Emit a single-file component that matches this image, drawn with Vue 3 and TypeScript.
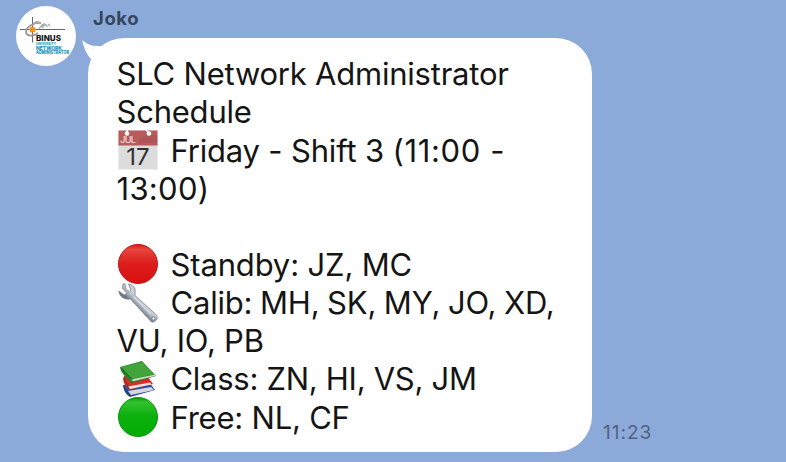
<script setup lang="ts">
type Icon = 'calendar' | 'red' | 'wrench' | 'books' | 'green'

interface Line {
  id: string
  text: string
  hours?: string
  icon?: Icon
}

const lines: Line[] = [
  { id: 'title', text: 'SLC Network Administrator' },
  { id: 'title-end', text: 'Schedule' },
  { id: 'shift', text: 'Friday - Shift 3 ', hours: '(11:00 -', icon: 'calendar' },
  { id: 'shift-end', text: '13:00)' },
  { id: 'blank', text: '' },
  { id: 'standby', text: 'Standby: JZ, MC', icon: 'red' },
  { id: 'calib', text: 'Calib: MH, SK, MY, JO, XD,', icon: 'wrench' },
  { id: 'calib-end', text: 'VU, IO, PB' },
  { id: 'class', text: 'Class: ZN, HI, VS, JM', icon: 'books' },
  { id: 'free', text: 'Free: NL, CF', icon: 'green' },
]
</script>

<template>
  <main class="chat">
    <svg class="avatar" viewBox="0 0 60 60">
      <circle cx="30" cy="30" r="30" fill="#fff" />
      <g fill="none" stroke="#555" stroke-width=".9">
        <path d="M4 23.500H49M16.500 11V36.500" />
        <path d="M25 17C18 16 10 21 10 26c0 4 7 5 12 1" stroke="#999" stroke-width="1.800" />
        <path d="M18 17q5-3 6 1M23 23q3-5 6-5m-3 4q4-6 5-1m1-3 2 2" stroke="#aaa" stroke-width="1.400" />
      </g>
      <circle cx="16.500" cy="23.800" r="3" fill="#f39212" />
      <g class="logo-text">
        <text x="20" y="34.800" font-size="7.600" textLength="25" lengthAdjust="spacingAndGlyphs" fill="#111">BINUS</text>
        <text x="20" y="38.900" font-size="3.900" textLength="20" lengthAdjust="spacingAndGlyphs" fill="#2c9dbd">UNIVERSITY</text>
        <text x="20" y="43.700" font-size="5" textLength="26" lengthAdjust="spacingAndGlyphs" fill="#168fb8">NETWORK</text>
        <text x="20" y="48.200" font-size="4.500" textLength="33" lengthAdjust="spacingAndGlyphs" fill="#168fb8">ADMINISTRATOR</text>
      </g>
    </svg>

    <section class="message">
      <div class="sender">Joko</div>
      <div class="row">
        <div class="bubble">
          <svg class="tail" viewBox="0 0 40 30">
            <path d="M.3 0Q7 7 19 5.900L26 8L14 24L8.500 18.500Q2 11 .3 0Z" fill="#fff" />
          </svg>
          <p v-for="line in lines" :key="line.id" class="line" :class="line.id">
            <svg v-if="line.icon" class="icon" viewBox="0 0 40 40">
              <defs>
                <linearGradient id="redFill" x1="0" y1="0" x2="0" y2="1">
                  <stop offset="0" stop-color="#d51b18" /><stop offset=".12" stop-color="#e8443e" />
                  <stop offset=".48" stop-color="#dc1f1d" /><stop offset="1" stop-color="#d90f10" />
                </linearGradient>
                <linearGradient id="greenFill" x1="0" y1="0" x2="0" y2="1">
                  <stop offset="0" stop-color="#079b08" /><stop offset=".12" stop-color="#33c22f" />
                  <stop offset=".48" stop-color="#0bb00c" /><stop offset="1" stop-color="#03ad05" />
                </linearGradient>
                <linearGradient id="steel" gradientUnits="userSpaceOnUse" x1="22" y1="18" x2="17" y2="23">
                  <stop offset="0" stop-color="#c9d0d7" /><stop offset=".5" stop-color="#a4adb7" /><stop offset="1" stop-color="#6b7480" />
                </linearGradient>
              </defs>
              <g v-if="line.icon === 'calendar'">
                <path d="M.5.500H39.500V39.500H.5Z" fill="#dcdcdc" />
                <path d="M.5.500H39.500V15.500H.5Z" fill="#b95a5b" />
                <path d="M22 13V8m2 5V7m2 6V7m2 6V6m2 7V6m2 7V6m2 7V5m2 8V5m2 8V5" stroke="#a44d4e" stroke-width=".8" />
                <path d="M9 0V3M28 0l3 3" stroke="#fff" stroke-width="1.500" />
                <circle cx="9" cy="3.500" r="2.300" fill="#fff" /><circle cx="31" cy="3.500" r="2.300" fill="#fff" />
                <text x="2.200" y="13.300" font-size="9" textLength="15.500" fill="#fbeaea">JUL</text>
                <text x="8.300" y="35" font-size="23" textLength="23" lengthAdjust="spacingAndGlyphs" fill="#333">17</text>
              </g>
              <circle v-else-if="line.icon === 'red'" cx="20" cy="20" r="19.500" fill="url(#redFill)" stroke="#bd1714" />
              <circle v-else-if="line.icon === 'green'" cx="20" cy="20" r="19.500" fill="url(#greenFill)" stroke="#09930a" />
              <g v-else-if="line.icon === 'wrench'">
                <path d="M7 .7 7.500 6 11 8.500 13 7 10.500 1C15 1.500 18 5 17 9L17 12.500 38.500 32C41 35.500 37 40 33.500 39L12.500 16C6 17 1 13 1 8L6 12 9 10.500 4.500 5.500 5 1Z" fill="url(#steel)" stroke="#78828e" stroke-width=".8" stroke-linejoin="round" />
                <path d="m16 14 17 17" stroke="#d9dee2" stroke-width="1.300" />
                <circle cx="35.500" cy="35.500" r="1.700" fill="#fff" stroke="#59626d" stroke-width=".9" />
              </g>
              <g v-else>
                <path d="M5 26 31 23 37 31 12 38Q8 36 6 31Z" fill="#244aa4" />
                <path d="m10 32 23-4 3 3-23 5Z" fill="#d5d8df" />
                <path d="M6 17 28 15 35 25 11 31Q6 27 5 20Z" fill="#d72d25" />
                <path d="m10 27.500 22-4 1.500 2-21.500 4.500Z" fill="#eee2dd" />
                <path d="M2 8 24 2 38 17 14 24Q6 17 3 12Z" fill="#258226" />
                <path d="M3 8 24 3 36 15 14 20Z" fill="#42a53c" />
                <path d="m13 20.500 24-5v1.500l-23 5.500Z" fill="#cfdcc8" />
                <path d="M3 9 14 20v4M6 19l5 11M5 27l7 10" fill="none" stroke="#174b29" stroke-width=".7" />
              </g>
            </svg>
            <span class="text">{{ line.text }}<span v-if="line.hours" class="hours">{{ line.hours }}</span></span>
          </p>
        </div>
        <time class="time">11:23</time>
      </div>
    </section>
  </main>
</template>

<style>
body { background: #8caad9; }
</style>

<style scoped>
.chat {
  box-sizing: border-box;
  display: flex;
  align-items: flex-start;
  gap: 12px;
  width: 786px;
  height: 462px;
  padding: 6px 0 0 16px;
  overflow: hidden;
  background: #8caad9;
  font-family: Inter, sans-serif;
}
.avatar { flex: none; width: 60px; height: 60px; }
.logo-text { font-family: Inter, sans-serif; font-weight: 800; }
.sender {
  height: 32px;
  padding-left: 5px;
  color: #35465d;
  font-size: 18.500px;
  font-weight: 700;
  line-height: 25px;
  letter-spacing: .6px;
}
.row { display: flex; align-items: flex-end; gap: 11px; }
.bubble {
  box-sizing: border-box;
  position: relative;
  width: 504px;
  height: 414px;
  padding: 17px 0 0 28.500px;
  border-radius: 36px;
  background: #fff;
}
.tail { position: absolute; left: -6px; top: 2px; width: 40px; height: 30px; }
.line {
  display: flex;
  align-items: center;
  gap: 12.500px;
  height: 38.170px;
  margin: 0;
  color: #151515;
  font-size: 31px;
  line-height: 38.170px;
  letter-spacing: -.22px;
  white-space: pre;
}
.shift { letter-spacing: -.18px; }
.shift .text { padding-top: 1px; }
.hours { letter-spacing: .65px; }
.shift-end { letter-spacing: .3px; }
.shift-end .text { padding-top: 1px; }
.standby { letter-spacing: -.15px; }
.calib { letter-spacing: -.2px; word-spacing: -.8px; }
.class { letter-spacing: -.28px; }
.free .text { padding-top: 1px; }
.icon { flex: none; width: 40px; height: 40px; margin: -1px 0 0 1.500px; }
.time {
  margin-bottom: 7px;
  color: #506380;
  font-size: 19px;
  line-height: 24px;
  letter-spacing: 1px;
}
</style>
